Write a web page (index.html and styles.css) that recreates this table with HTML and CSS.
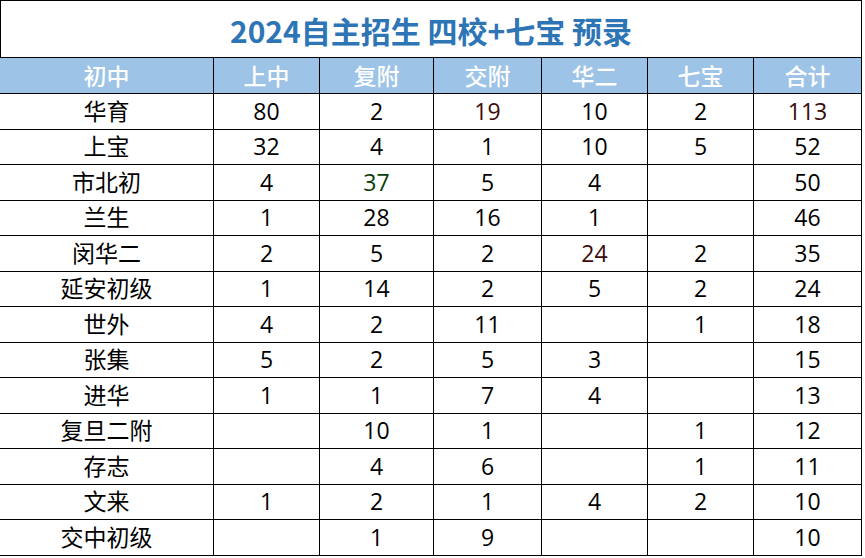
FILE: index.html
```html
<!DOCTYPE html>
<html lang="zh-CN">
<head>
<meta charset="utf-8">
<title>2024自主招生 四校+七宝 预录</title>
<link rel="stylesheet" href="styles.css">
</head>
<body>
<div class="sheet">
  <div class="title">2024自主招生 四校+七宝 预录</div>
  <div class="row head">
    <div class="c">初中</div><div class="c">上中</div><div class="c">复附</div><div class="c">交附</div><div class="c">华二</div><div class="c">七宝</div><div class="c">合计</div>
  </div>
  <div class="row"><div class="c">华育</div><div class="c">80</div><div class="c">2</div><div class="c red">19</div><div class="c">10</div><div class="c">2</div><div class="c red">113</div></div>
  <div class="row"><div class="c">上宝</div><div class="c">32</div><div class="c">4</div><div class="c">1</div><div class="c">10</div><div class="c">5</div><div class="c">52</div></div>
  <div class="row"><div class="c">市北初</div><div class="c">4</div><div class="c green">37</div><div class="c">5</div><div class="c">4</div><div class="c"></div><div class="c">50</div></div>
  <div class="row"><div class="c">兰生</div><div class="c">1</div><div class="c">28</div><div class="c">16</div><div class="c">1</div><div class="c"></div><div class="c">46</div></div>
  <div class="row"><div class="c">闵华二</div><div class="c">2</div><div class="c">5</div><div class="c">2</div><div class="c red">24</div><div class="c">2</div><div class="c">35</div></div>
  <div class="row"><div class="c">延安初级</div><div class="c">1</div><div class="c">14</div><div class="c">2</div><div class="c">5</div><div class="c">2</div><div class="c">24</div></div>
  <div class="row"><div class="c">世外</div><div class="c">4</div><div class="c">2</div><div class="c">11</div><div class="c"></div><div class="c">1</div><div class="c">18</div></div>
  <div class="row"><div class="c">张集</div><div class="c">5</div><div class="c">2</div><div class="c">5</div><div class="c">3</div><div class="c"></div><div class="c">15</div></div>
  <div class="row"><div class="c">进华</div><div class="c">1</div><div class="c">1</div><div class="c">7</div><div class="c">4</div><div class="c"></div><div class="c">13</div></div>
  <div class="row"><div class="c">复旦二附</div><div class="c"></div><div class="c">10</div><div class="c">1</div><div class="c"></div><div class="c">1</div><div class="c">12</div></div>
  <div class="row"><div class="c">存志</div><div class="c"></div><div class="c">4</div><div class="c">6</div><div class="c"></div><div class="c">1</div><div class="c">11</div></div>
  <div class="row"><div class="c">文来</div><div class="c">1</div><div class="c">2</div><div class="c">1</div><div class="c">4</div><div class="c">2</div><div class="c">10</div></div>
  <div class="row"><div class="c">交中初级</div><div class="c"></div><div class="c">1</div><div class="c">9</div><div class="c"></div><div class="c"></div><div class="c">10</div></div>
</div>
</body>
</html>
```
FILE: styles.css
```css
html, body {
  margin: 0;
  padding: 0;
  background: #fff;
}
body {
  font-family: "Open Sans", "Noto Sans CJK SC", sans-serif;
  color: #000;
}
.sheet {
  width: 862px;
}
.title {
  box-sizing: border-box;
  height: 57px;
  border-top: 1px solid #000;
  border-left: 1px solid #000;
  border-right: 1px solid #000;
  display: flex;
  align-items: center;
  justify-content: center;
  font-family: "Noto Sans CJK SC", sans-serif;
  font-weight: bold;
  font-size: 30px;
  color: #2e75b6;
  padding-top: 1px;
}
.row {
  display: grid;
  grid-template-columns: 214px 106px 114px 108px 106px 106px 108px;
  height: 35.5px;
}
.row.head {
  height: 37px;
  background: #9dc3e6;
  border-top: 1px solid #000;
  box-sizing: border-box;
}
.row.head .c {
  color: #fff;
  font-family: "Noto Sans CJK SC", sans-serif;
  font-weight: 500;
}
.c {
  box-sizing: border-box;
  border-right: 1px solid #000;
  border-bottom: 1px solid #000;
  display: flex;
  align-items: center;
  justify-content: center;
  font-size: 23px;
  line-height: 1;
}
.red { color: #3d0a0a; }
.green { color: #0b3d0b; }
```
